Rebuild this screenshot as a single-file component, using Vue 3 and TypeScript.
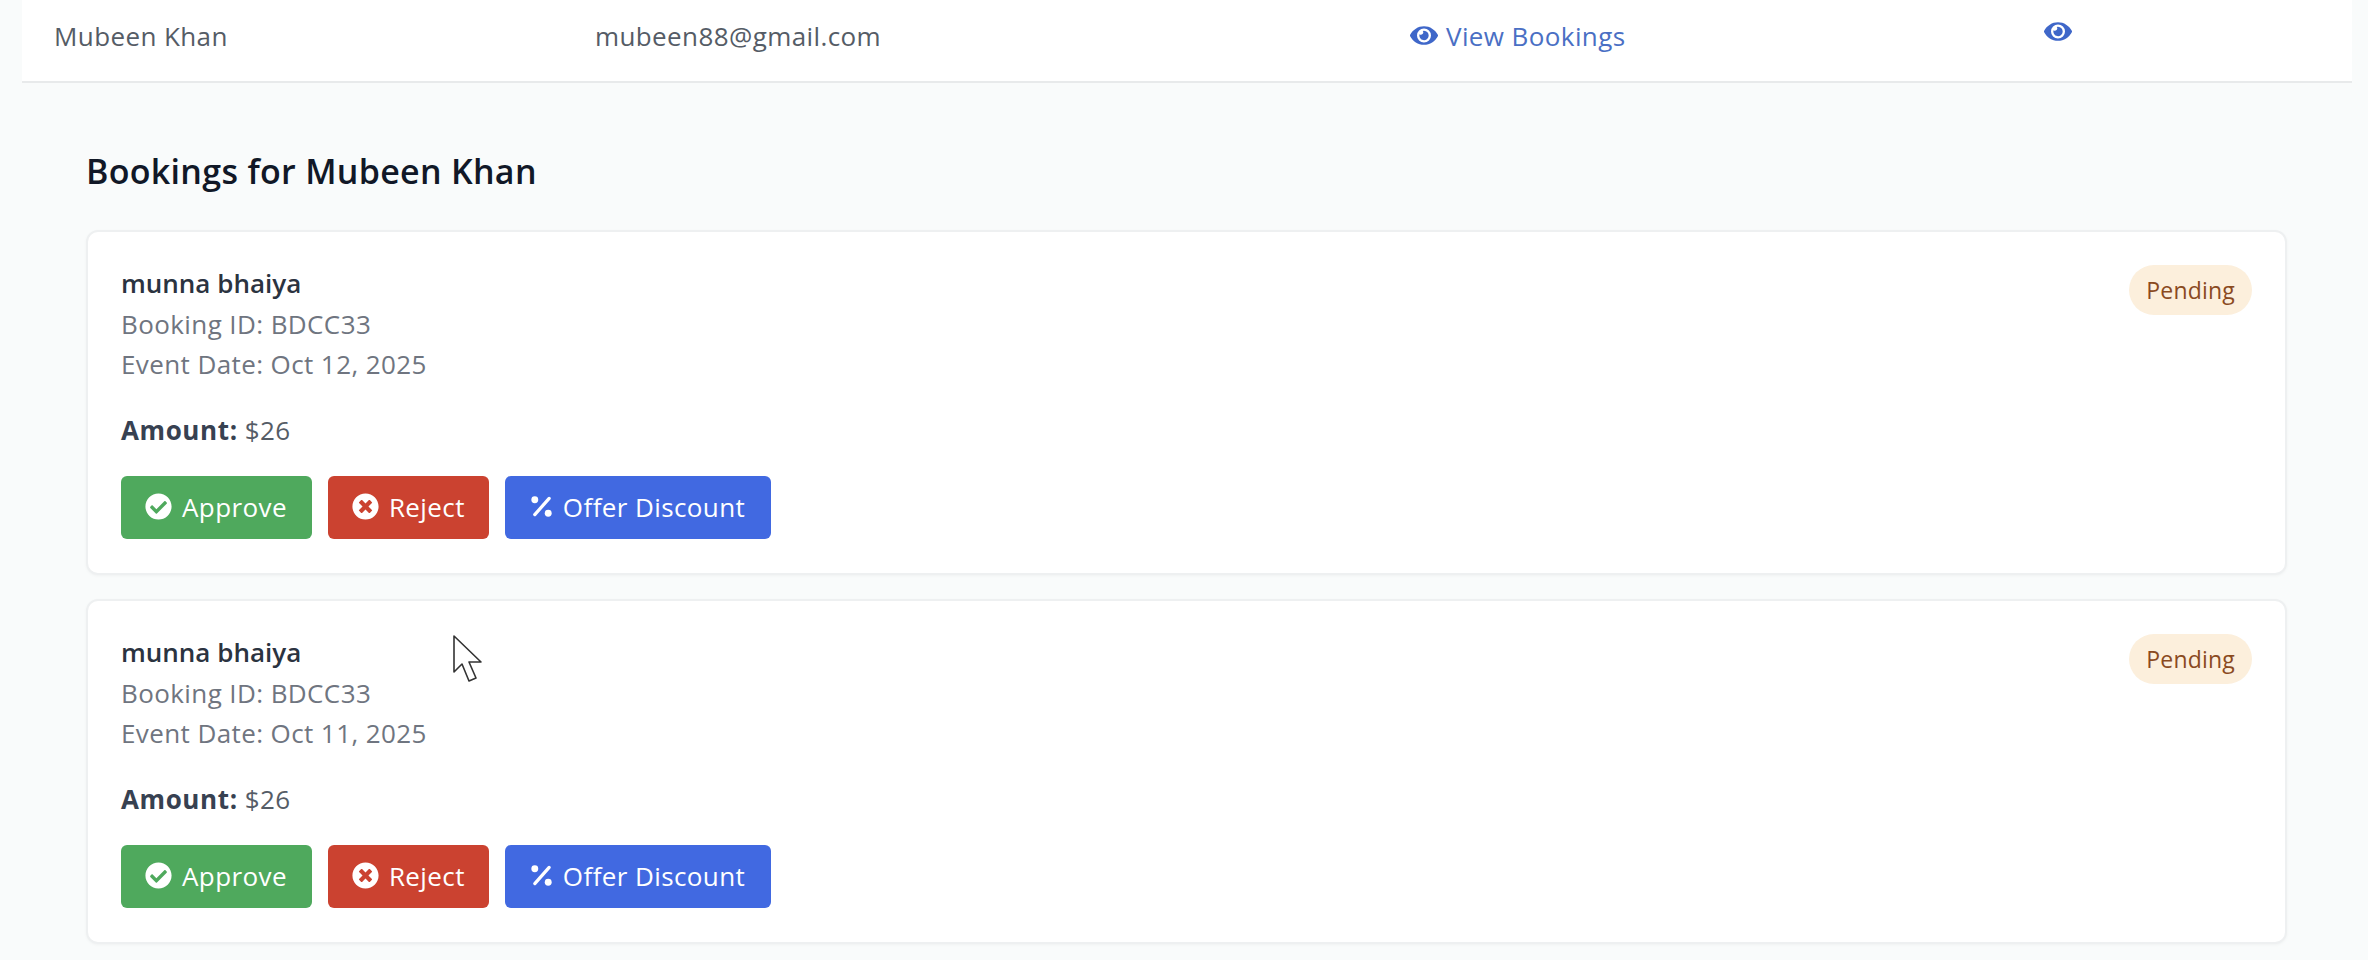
<script setup lang="ts">
interface Booking {
  id: string;
  name: string;
  date: string;
  amount: string;
}

const bookings: Booking[] = [
  { id: 'BDCC33', name: 'munna bhaiya', date: 'Oct 12, 2025', amount: '$26' },
  { id: 'BDCC33', name: 'munna bhaiya', date: 'Oct 11, 2025', amount: '$26' },
];

const eyePath =
  'M572.52 241.4C518.29 135.59 410.93 64 288 64S57.68 135.64 3.48 241.41a32.35 32.35 0 0 0 0 29.19C57.71 376.41 165.07 448 288 448s230.32-71.64 284.52-177.41a32.35 32.35 0 0 0 0-29.19zM288 400a144 144 0 1 1 144-144 143.93 143.93 0 0 1-144 144zm0-240a95.31 95.31 0 0 0-25.31 3.79 47.85 47.85 0 0 1-66.9 66.9A95.78 95.78 0 1 0 288 160z';
const checkPath =
  'M504 256c0 136.967-111.033 248-248 248S8 392.967 8 256 119.033 8 256 8s248 111.033 248 248zM227.314 387.314l184-184c6.248-6.248 6.248-16.379 0-22.627l-22.627-22.627c-6.248-6.249-16.379-6.249-22.628 0L216 308.118l-70.059-70.059c-6.248-6.248-16.379-6.248-22.628 0l-22.627 22.627c-6.248 6.248-6.248 16.379 0 22.627l104 104c6.249 6.249 16.379 6.249 22.628.001z';
const timesPath =
  'M256 8C119 8 8 119 8 256s111 248 248 248 248-111 248-248S393 8 256 8zm121.6 313.1c4.7 4.7 4.7 12.3 0 17L338 377.6c-4.7 4.7-12.3 4.7-17 0L256 312l-65.1 65.6c-4.7 4.7-12.3 4.7-17 0L134.4 338c-4.7-4.7-4.7-12.3 0-17l65.6-65-65.6-65.1c-4.7-4.7-4.7-12.3 0-17l39.6-39.6c4.7-4.7 12.3-4.7 17 0l65 65.7 65.1-65.6c4.7-4.7 12.3-4.7 17 0l39.6 39.6c4.7 4.7 4.7 12.3 0 17L312 256l65.6 65.1z';
</script>

<template>
  <div class="page">
    <div class="user-row">
      <span class="user-name">Mubeen Khan</span>
      <span class="user-email">mubeen88@gmail.com</span>
      <a class="view-link">
        <svg class="eye" viewBox="0 0 576 512"><path :d="eyePath" /></svg>
        View Bookings
      </a>
      <span class="action-cell">
        <svg class="eye" viewBox="0 0 576 512"><path :d="eyePath" /></svg>
      </span>
    </div>

    <section class="panel">
      <h3 class="panel-title">Bookings for Mubeen Khan</h3>

      <article v-for="b in bookings" :key="b.date" class="card">
        <div class="card-head">
          <div class="card-info">
            <div class="event-name">{{ b.name }}</div>
            <div class="muted">Booking ID: {{ b.id }}</div>
            <div class="muted">Event Date: {{ b.date }}</div>
          </div>
          <span class="badge">Pending</span>
        </div>
        <div class="amount"><strong>Amount:</strong> {{ b.amount }}</div>
        <div class="actions">
          <button class="btn btn-green">
            <svg class="btn-icon" viewBox="0 0 512 512"><path :d="checkPath" /></svg>
            Approve
          </button>
          <button class="btn btn-red">
            <svg class="btn-icon" viewBox="0 0 512 512"><path :d="timesPath" /></svg>
            Reject
          </button>
          <button class="btn btn-blue">
            <svg class="btn-icon pct" viewBox="0 0 24 24">
              <circle cx="5" cy="5" r="3.6" />
              <circle cx="19" cy="19" r="3.6" />
              <path d="M20 3.5 5 20.5" stroke="#fff" stroke-width="3.4" stroke-linecap="round" />
            </svg>
            Offer Discount
          </button>
        </div>
      </article>
    </section>

    <!-- mouse pointer captured in the recording -->
    <svg class="cursor" viewBox="0 0 32 50">
      <path
        d="M2 2 L2 38 L10 30 L17 47 L24 44 L17 28 L29 28 Z"
        fill="#fff"
        stroke="#333"
        stroke-width="1.6"
        stroke-linejoin="round"
      />
    </svg>
  </div>
</template>

<style>
html,
body {
  background: #f9fbfb;
}
</style>

<style scoped>
.page {
  position: relative;
  height: 960px;
  margin: 0 16px 0 22px;
  overflow: hidden;
  font-family: 'Open Sans', 'Liberation Sans', sans-serif;
  font-size: 26px;
  letter-spacing: 0.4px;
  color: #555c66;
  background: #f9fbfb;
}

.user-row {
  display: grid;
  grid-template-columns: 541px 815px 634px 1fr;
  align-items: center;
  height: 71px;
  padding: 0 0 10px 32px;
  background: #fff;
  border-bottom: 2px solid #e8eaeb;
}

.view-link {
  display: flex;
  align-items: center;
  gap: 8px;
  color: #4a6fc4;
}

.eye {
  width: 28px;
  height: 25px;
  fill: #3f67c9;
}

.action-cell {
  display: flex;
  margin-top: -8px;
}

.panel {
  padding: 0 65px 0 64px;
}

.panel-title {
  margin: 0;
  padding: 66px 0 37px;
  font-size: 34px;
  line-height: 44px;
  font-weight: 600;
  letter-spacing: 0.3px;
  color: #111827;
}

.card {
  margin-bottom: 24px;
  padding: 31px 33px 34px;
  background: #fff;
  border: 2px solid #eef0f1;
  border-radius: 12px;
  box-shadow: 0 1px 3px rgba(0, 0, 0, 0.04);
}

.card-head {
  display: flex;
  justify-content: space-between;
  align-items: flex-start;
}

.card-info {
  line-height: 40px;
}

.event-name {
  margin-bottom: 1px;
  font-weight: 600;
  letter-spacing: 0;
  color: #2b3340;
}

.muted {
  color: #6f7580;
}

.badge {
  display: flex;
  align-items: center;
  height: 50px;
  padding: 0 17px;
  margin-top: 2px;
  font-size: 23px;
  letter-spacing: 0.2px;
  color: #8a4a1f;
  background: #fcefdc;
  border-radius: 25px;
}

.amount {
  margin-top: 26px;
  line-height: 40px;
}

.amount strong {
  font-weight: 700;
  letter-spacing: 0.6px;
  color: #374151;
}

.actions {
  display: flex;
  gap: 16px;
  margin-top: 26px;
}

.btn {
  display: flex;
  align-items: center;
  gap: 10px;
  height: 63px;
  padding: 0 24px 2px;
  font: inherit;
  letter-spacing: inherit;
  color: #fff;
  border: 0;
  border-radius: 6px;
}

.btn-green {
  padding-right: 25px;
  background: #4fa95d;
}

.btn-red {
  background: #cb4230;
}

.btn-blue {
  padding-left: 25px;
  padding-right: 26px;
  background: #4169e1;
}

.btn-icon {
  width: 27px;
  height: 27px;
  fill: #fff;
}

.pct {
  width: 23px;
  height: 23px;
}

.cursor {
  position: absolute;
  left: 430px;
  top: 634px;
  width: 32px;
  height: 50px;
}
</style>
